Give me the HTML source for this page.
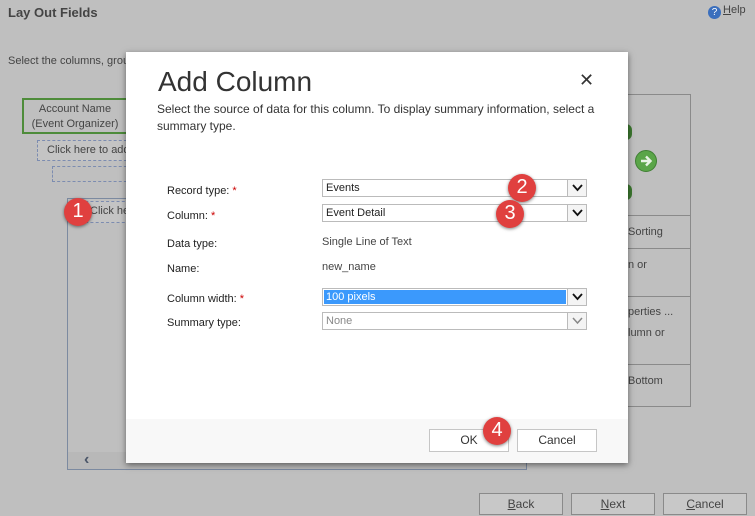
<!DOCTYPE html>
<html><head><style>
*{margin:0;padding:0;box-sizing:border-box}
body{width:755px;height:516px;background:#bfbfbf;font-family:"Segoe UI","Liberation Sans",sans-serif;font-size:12px;color:#444;position:relative;overflow:hidden}
.a{position:absolute}
.dlg{left:126px;top:52px;width:502px;height:411px;background:#fff;box-shadow:0 2px 6px rgba(0,0,0,.5)}
.lbl{font-size:11px;color:#222}
.sel{position:absolute;height:18px;border:1px solid #bbb;background:#fff;font-size:11px;color:#222;padding:0 3px;line-height:16px}
.sel .dd{position:absolute;right:0;top:0;width:19px;height:16px;border-left:1px solid #bbb;background:#f4f4f4}
.sel .dd svg{position:absolute;left:4px;top:4px}
.badge{position:absolute;width:28px;height:28px;border-radius:50%;background:#e0403f;color:#fff;font-size:20px;text-align:center;line-height:27px;box-shadow:0 1px 3px rgba(0,0,0,.5);font-family:"Liberation Sans",sans-serif}
.btn{position:absolute;height:23px;border:1px solid #c6c6c6;background:#fff;text-align:center;font-size:12px;color:#333;line-height:21px}
.gb{position:absolute;height:22px;width:84px;border:1px solid #8a8a8a;background:#c8c8c8;text-align:center;line-height:20px;color:#444}
</style></head><body>
<div class="a" style="left:8px;top:5px;font-weight:bold;font-size:13px;color:#444">Lay Out Fields</div>
<div class="a" style="left:708px;top:4px;width:47px;font-size:11px;white-space:nowrap"><span style="display:inline-block;width:13px;height:13px;border-radius:50%;background:#3b6fbd;color:#fff;font-size:10px;text-align:center;line-height:13px;vertical-align:-2px;margin-right:2px">?</span><u>H</u>elp</div>
<div class="a" style="left:8px;top:55px;font-size:11px">Select the columns, grou</div>
<div class="a" style="left:22px;top:98px;width:106px;height:36px;border:2px solid #4e8c3a;text-align:center;font-size:11px;line-height:15px;padding-top:2px">Account Name<br>(Event Organizer)</div>
<div class="a" style="left:37px;top:140px;width:95px;height:21px;border:1px dashed #7c8cb0;background:#c4c4c4;font-size:11px;padding:3px 0 0 9px;white-space:nowrap;overflow:hidden">Click here to add</div>
<div class="a" style="left:52px;top:166px;width:80px;height:16px;border:1px dashed #7c8cb0"></div>
<div class="a" style="left:67px;top:198px;width:460px;height:272px;border:1px solid #7c8aa0"></div>
<div class="a" style="left:68px;top:452px;width:458px;height:17px;background:#b8b8b8;color:#4a5568;font-size:16px;font-weight:bold;padding-left:16px;line-height:16px">‹</div>
<div class="a" style="left:80px;top:201px;width:50px;height:22px;border:1px dashed #7c8cb0;background:#c4c4c4;font-size:11px;padding:3px 0 0 9px;white-space:nowrap;overflow:hidden">Click her</div>
<div class="badge" style="left:64px;top:198px">1</div>
<div class="a" style="left:628px;top:94px;width:63px;height:313px;border:1px solid #8a8a8a;border-left:none"></div>
<div class="a" style="left:628px;top:215px;width:63px;border-top:1px solid #8a8a8a"></div>
<div class="a" style="left:628px;top:248px;width:63px;border-top:1px solid #8a8a8a"></div>
<div class="a" style="left:628px;top:296px;width:63px;border-top:1px solid #8a8a8a"></div>
<div class="a" style="left:628px;top:364px;width:63px;border-top:1px solid #8a8a8a"></div>
<div class="a" style="left:635px;top:150px;width:22px;height:22px;border-radius:50%;background:#5aa548;border:1px solid #3f7f33"><svg width="20" height="20" viewBox="0 0 20 20" style="position:absolute;left:0;top:0"><path d="M5 10h9M10 5.5l4.5 4.5L10 14.5" stroke="#e8f3e4" stroke-width="2.4" fill="none"/></svg></div>
<div class="a" style="left:626px;top:124px;width:6px;height:16px;background:#3d7a30;border-radius:0 8px 8px 0"></div>
<div class="a" style="left:626px;top:184px;width:6px;height:16px;background:#3d7a30;border-radius:0 8px 8px 0"></div>
<div class="a" style="left:628px;top:226px;font-size:11px">Sorting</div>
<div class="a" style="left:628px;top:259px;font-size:11px">n or</div>
<div class="a" style="left:628px;top:306px;font-size:11px">perties ...</div>
<div class="a" style="left:628px;top:327px;font-size:11px">lumn or</div>
<div class="a" style="left:628px;top:375px;font-size:11px">Bottom</div>
<div class="gb" style="left:479px;top:493px"><u>B</u>ack</div>
<div class="gb" style="left:571px;top:493px"><u>N</u>ext</div>
<div class="gb" style="left:663px;top:493px"><u>C</u>ancel</div>

<div class="a dlg">
 <div class="a" style="left:32px;top:14px;font-size:28px;font-weight:300;color:#333;font-family:'Segoe UI Light','Liberation Sans',sans-serif">Add Column</div>
 <div class="a" style="left:453px;top:18px;font-size:18px;color:#333">✕</div>
 <div class="a" style="left:31px;top:49px;width:450px;font-size:12px;line-height:17px;color:#333">Select the source of data for this column. To display summary information, select a summary type.</div>
 <div class="a lbl" style="left:41px;top:133px">Record type: <span style="color:#c00">*</span></div>
 <div class="a lbl" style="left:41px;top:158px">Column: <span style="color:#c00">*</span></div>
 <div class="a lbl" style="left:41px;top:186px">Data type:</div>
 <div class="a lbl" style="left:41px;top:211px">Name:</div>
 <div class="a lbl" style="left:41px;top:241px">Column width: <span style="color:#c00">*</span></div>
 <div class="a lbl" style="left:41px;top:265px">Summary type:</div>
 <div class="sel" style="left:196px;top:127px;width:265px">Events<div class="dd"><svg width="11" height="8"><path d="M1 1l4.5 5L10 1" stroke="#111" stroke-width="1.8" fill="none"/></svg></div></div>
 <div class="sel" style="left:196px;top:152px;width:265px">Event Detail<div class="dd"><svg width="11" height="8"><path d="M1 1l4.5 5L10 1" stroke="#111" stroke-width="1.8" fill="none"/></svg></div></div>
 <div class="a lbl" style="left:196px;top:184px;color:#444">Single Line of Text</div>
 <div class="a lbl" style="left:196px;top:209px;color:#444">new_name</div>
 <div class="sel" style="left:196px;top:236px;width:265px;padding:1px"><div style="background:#3b99fc;color:#fff;height:14px;line-height:14px;width:242px;padding-left:2px">100 pixels</div><div class="dd"><svg width="11" height="8"><path d="M1 1l4.5 5L10 1" stroke="#111" stroke-width="1.8" fill="none"/></svg></div></div>
 <div class="sel" style="left:196px;top:260px;width:265px;color:#888">None<div class="dd"><svg width="11" height="8"><path d="M1 1l4.5 5L10 1" stroke="#888" stroke-width="1.5" fill="none"/></svg></div></div>
 <div class="badge" style="left:382px;top:122px">2</div>
 <div class="badge" style="left:370px;top:148px">3</div>
 <div class="a" style="left:0;top:367px;width:502px;height:44px;background:#f8f8f8"></div>
 <div class="btn" style="left:303px;top:377px;width:80px">OK</div>
 <div class="btn" style="left:391px;top:377px;width:80px">Cancel</div>
 <div class="badge" style="left:357px;top:365px">4</div>
</div>
</body></html>
